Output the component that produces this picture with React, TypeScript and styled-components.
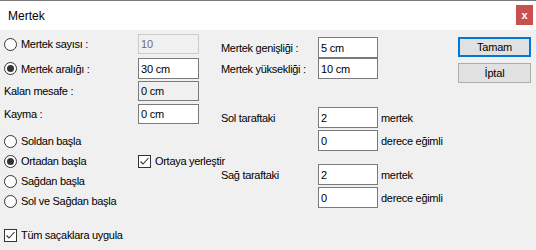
import React from "react";
import styled, { createGlobalStyle } from "styled-components";

const Global = createGlobalStyle`
  html, body { margin: 0; padding: 0; background: #f0f0f0; }
  body { font-family: "Liberation Sans", Arial, sans-serif; font-size: 11px; color: #000; }
`;

const Window = styled.div`
  width: 536px;
  height: 250px;
  background: #f0f0f0;
  box-sizing: border-box;
  overflow: hidden;
`;

const TitleBar = styled.div`
  height: 30px;
  box-sizing: border-box;
  background: #fff;
  border-top: 1px solid #7a7a7a;
  display: flex;
  align-items: center;
  justify-content: space-between;
  padding-left: 8px;
  padding-right: 3px;
`;

const TitleText = styled.span`
  font-size: 12px;
  color: #000;
`;

const CloseButton = styled.div`
  width: 17px;
  height: 20px;
  background: #c75050;
  color: #fff;
  font-weight: bold;
  font-size: 11px;
  display: flex;
  align-items: center;
  justify-content: center;
  margin-top: -1px;
`;

const Content = styled.div`
  display: flex;
  padding: 4px 0 0 4px;
`;

const LeftCol = styled.div`
  width: 195px;
  display: flex;
  flex-direction: column;
`;

const MidCol = styled.div`
  width: 237px;
  margin-left: 22px;
  display: flex;
  flex-direction: column;
`;

const RightCol = styled.div`
  display: flex;
  flex-direction: column;
  gap: 6px;
  padding-top: 3px;
`;

const LeftRow = styled.div<{ $mt: number; $h?: number }>`
  display: grid;
  grid-template-columns: 134px 61px;
  align-items: center;
  height: ${(p) => p.$h ?? 20}px;
  margin-top: ${(p) => p.$mt}px;
  white-space: nowrap;
`;

const MidRow = styled.div<{ $mt: number }>`
  display: grid;
  grid-template-columns: 97px 60px auto;
  align-items: center;
  height: 21px;
  margin-top: ${(p) => p.$mt}px;
  white-space: nowrap;
`;

const Label = styled.span`
  letter-spacing: -0.3px;
`;

const SideText = styled.span`
  padding-left: 3px;
  letter-spacing: -0.3px;
`;

const Input = styled.div<{ $variant?: "normal" | "disabled" | "readonly" }>`
  height: 100%;
  box-sizing: border-box;
  border: 1px solid ${(p) => (p.$variant === "disabled" ? "#cccccc" : "#7a7a7a")};
  background: ${(p) => (p.$variant && p.$variant !== "normal" ? "#f0f0f0" : "#fff")};
  color: ${(p) => (p.$variant === "disabled" ? "#6d6d6d" : "#000")};
  padding: 0 2px;
  display: flex;
  align-items: center;
  letter-spacing: -0.2px;
`;

const OptionWrap = styled.label`
  display: flex;
  align-items: center;
  gap: 4px;
  letter-spacing: -0.3px;
  white-space: nowrap;
`;

const RadioCircle = styled.span<{ $checked?: boolean }>`
  width: 13px;
  height: 13px;
  box-sizing: border-box;
  border-radius: 50%;
  border: 1px solid #333;
  background: #fff;
  display: flex;
  align-items: center;
  justify-content: center;
  flex-shrink: 0;
  &::after {
    content: "";
    width: 7px;
    height: 7px;
    border-radius: 50%;
    background: #333;
    display: ${(p) => (p.$checked ? "block" : "none")};
  }
`;

const CheckBox = styled.span`
  width: 13px;
  height: 13px;
  box-sizing: border-box;
  border: 1px solid #333;
  background: #fff;
  display: flex;
  align-items: center;
  justify-content: center;
  flex-shrink: 0;
`;

const Button = styled.div<{ $focused?: boolean }>`
  width: 73px;
  height: 20px;
  box-sizing: border-box;
  background: #e1e1e1;
  border: ${(p) => (p.$focused ? "2px solid #0078d7" : "1px solid #adadad")};
  display: flex;
  align-items: center;
  justify-content: center;
  letter-spacing: -0.2px;
`;

const Radio = ({ label, checked }: { label: string; checked?: boolean }) => (
  <OptionWrap>
    <RadioCircle $checked={checked} />
    <span>{label}</span>
  </OptionWrap>
);

const Check = ({ label }: { label: string }) => (
  <OptionWrap>
    <CheckBox>
      <svg width="11" height="11" viewBox="0 0 11 11">
        <polyline points="1.5,5.5 4,8 9.5,2" fill="none" stroke="#333" strokeWidth="1.1" />
      </svg>
    </CheckBox>
    <span>{label}</span>
  </OptionWrap>
);

export default function App() {
  return (
    <Window>
      <Global />
      <TitleBar>
        <TitleText>Mertek</TitleText>
        <CloseButton>x</CloseButton>
      </TitleBar>
      <Content>
        <LeftCol>
          <LeftRow $mt={0}>
            <Radio label="Mertek sayısı :" />
            <Input $variant="disabled">10</Input>
          </LeftRow>
          <LeftRow $mt={4} $h={21}>
            <Radio label="Mertek aralığı :" checked />
            <Input>30 cm</Input>
          </LeftRow>
          <LeftRow $mt={2}>
            <Label>Kalan mesafe :</Label>
            <Input $variant="readonly">0 cm</Input>
          </LeftRow>
          <LeftRow $mt={3}>
            <Label>Kayma :</Label>
            <Input>0 cm</Input>
          </LeftRow>
          <LeftRow $mt={7}>
            <Radio label="Soldan başla" />
          </LeftRow>
          <LeftRow $mt={0}>
            <Radio label="Ortadan başla" checked />
            <Check label="Ortaya yerleştir" />
          </LeftRow>
          <LeftRow $mt={0}>
            <Radio label="Sağdan başla" />
          </LeftRow>
          <LeftRow $mt={0}>
            <Radio label="Sol ve Sağdan başla" />
          </LeftRow>
          <LeftRow $mt={14}>
            <Check label="Tüm saçaklara uygula" />
          </LeftRow>
        </LeftCol>
        <MidCol>
          <MidRow $mt={3}>
            <Label>Mertek genişliği :</Label>
            <Input>5 cm</Input>
          </MidRow>
          <MidRow $mt={0}>
            <Label>Mertek yüksekliği :</Label>
            <Input>10 cm</Input>
          </MidRow>
          <MidRow $mt={28}>
            <Label>Sol taraftaki</Label>
            <Input>2</Input>
            <SideText>mertek</SideText>
          </MidRow>
          <MidRow $mt={2}>
            <span />
            <Input>0</Input>
            <SideText>derece eğimli</SideText>
          </MidRow>
          <MidRow $mt={13}>
            <Label>Sağ taraftaki</Label>
            <Input>2</Input>
            <SideText>mertek</SideText>
          </MidRow>
          <MidRow $mt={2}>
            <span />
            <Input>0</Input>
            <SideText>derece eğimli</SideText>
          </MidRow>
        </MidCol>
        <RightCol>
          <Button $focused>Tamam</Button>
          <Button>İptal</Button>
        </RightCol>
      </Content>
    </Window>
  );
}
